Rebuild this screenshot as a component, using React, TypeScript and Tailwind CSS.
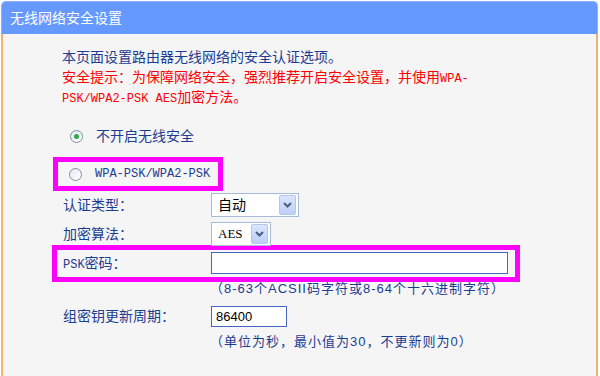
import React from "react";

const Chevron = () => (
  <svg width="9" height="6" viewBox="0 0 9 6" fill="none">
    <path d="M1 1l3.5 3.5L8 1" stroke="#4a5d85" strokeWidth="2" />
  </svg>
);

const Select: React.FC<{ value: string; className: string; valueClass?: string }> = ({ value, className, valueClass }) => (
  <div className={`h-[24px] border border-[#a7bad6] bg-white flex items-center justify-between pl-[6px] pr-[2px] ${className}`}>
    <span className={`text-black ${valueClass ?? ""}`}>{value}</span>
    <span className="w-[17px] h-[20px] rounded-[2px] border border-[#b4c6ee] bg-gradient-to-b from-[#dbe6fd] to-[#bccff7] flex items-center justify-center">
      <Chevron />
    </span>
  </div>
);

const Radio: React.FC<{ checked?: boolean }> = ({ checked }) => (
  <span className="w-[13px] h-[13px] rounded-full border border-[#7f8ea3] bg-gradient-to-br from-[#e4e8ee] to-white flex items-center justify-center shrink-0">
    {checked && <span className="w-[5px] h-[5px] rounded-full bg-[#2ea84a]" />}
  </span>
);

const mono = "font-['Liberation_Mono',monospace] text-[12px] tracking-normal";

export default function App() {
  return (
    <div className="w-[600px] h-[376px] bg-white overflow-hidden font-['Liberation_Sans','Noto_Sans_CJK_SC',sans-serif] text-[14px] text-[#1c3c92]">
      <div className="ml-[1px] w-[597px] pt-[1px]">
        <div className="h-[33px] rounded-t-[5px] bg-[#6699ff] border-t border-x border-[#8fb0ff] flex items-center pl-[8px] text-white text-[14px]">
          无线网络安全设置
        </div>
        <div className="h-[342px] border-x-2 border-[#f5b06b] bg-[#f5f5f5]">
          <div className="pl-[59px] pt-[13px]">
            <div className="h-[20px] leading-[20px]">本页面设置路由器无线网络的安全认证选项。</div>
            <div className="h-[20px] leading-[20px] text-[#ff0000]">
              安全提示：为保障网络安全，强烈推荐开启安全设置，并使用<span className={mono}>WPA-</span>
            </div>
            <div className="h-[20px] leading-[20px] text-[#ff0000]">
              <span className={mono}>PSK/WPA2-PSK AES</span>加密方法。
            </div>
          </div>

          <div className="mt-[19px] h-[20px] pl-[67px] flex items-center gap-[13px]">
            <Radio checked />
            <span>不开启无线安全</span>
          </div>

          <div className="mt-[11px] ml-[50px] w-[170px] h-[34px] border-[5px] border-[#ff00ff] flex items-center pl-[11px] gap-[13px]">
            <Radio />
            <span className={mono}>WPA-PSK/WPA2-PSK</span>
          </div>

          <div className="mt-[2px] h-[24px] pl-[60px] flex items-center">
            <span className="w-[148px]">认证类型：</span>
            <Select value="自动" className="w-[88px]" />
          </div>

          <div className="mt-[5px] h-[24px] pl-[60px] flex items-center">
            <span className="w-[148px]">加密算法：</span>
            <Select value="AES" className="w-[60px]" valueClass="font-['Liberation_Serif',serif] text-[13px]" />
          </div>

          <div className="-mt-[1px] ml-[49px] w-[468px] h-[37px] border-[5px] border-[#ff00ff] flex items-center pl-[6px]">
            <span className="w-[148px]">
              <span className={mono}>PSK</span>密码：
            </span>
            <div className="w-[297px] h-[22px] mb-[2px] border border-[#4566c2] bg-white" />
          </div>

          <div className="pl-[207px] h-[14px] flex items-center text-[13px] tracking-[1px]">（8-63个ACSII码字符或8-64个十六进制字符）</div>

          <div className="mt-[10px] h-[21px] pl-[60px] flex items-center">
            <span className="w-[148px]">组密钥更新周期：</span>
            <div className="w-[76px] h-[21px] border border-[#4566c2] bg-white flex items-center pl-[4px] text-black text-[13px]">
              86400
            </div>
          </div>

          <div className="mt-[8px] pl-[207px] h-[14px] flex items-center text-[13px] tracking-[1px]">（单位为秒，最小值为30，不更新则为0）</div>
        </div>
      </div>
    </div>
  );
}
